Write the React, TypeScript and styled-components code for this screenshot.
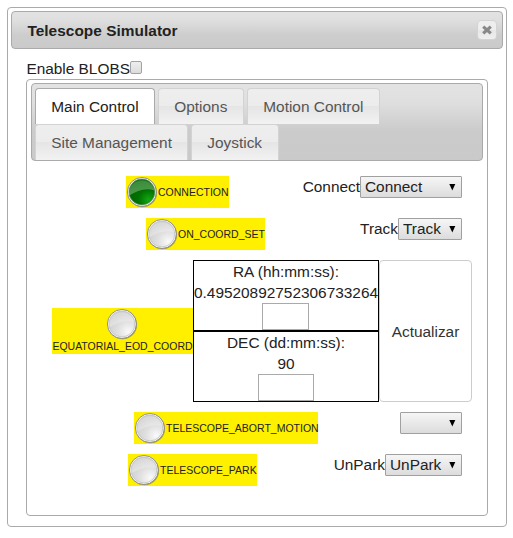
import React from "react";
import styled, { createGlobalStyle } from "styled-components";

const GlobalStyle = createGlobalStyle`
  *, *::before, *::after { box-sizing: border-box; }
  body {
    margin: 0;
    background: #fff;
    color: #222;
    font: 15.4px/21px "Liberation Sans", Arial, sans-serif;
  }
  input, select, button { font: inherit; color: inherit; }
`;

const Dialog = styled.section`
  width: 500px;
  height: 520px;
  margin: 7px;
  padding: 3px;
  border: 1px solid #aaa;
  border-radius: 4px;
`;

const TitleBar = styled.header`
  display: flex;
  align-items: center;
  justify-content: space-between;
  height: 38px;
  padding: 0 5px 0 15.4px;
  border: 1px solid #aaa;
  border-radius: 4px;
  background: linear-gradient(#e3e3e3 0%, #dedede 25%, #cdcdcd 65%, #cacaca 100%);
  font-weight: bold;
`;

const Title = styled.span`
  letter-spacing: 0.04px;
`;

const CloseButton = styled.button`
  display: grid;
  place-items: center;
  width: 20px;
  height: 20px;
  padding: 0;
  border: 1px solid #d3d3d3;
  border-radius: 4px;
  background: linear-gradient(#eee 49%, #e6e6e6 50%, #efefef);
`;

const Content = styled.div`
  padding: 9px 15px 0;
`;

const BlobsLabel = styled.label`
  display: flex;
  height: 21px;
  padding-left: 0.4px;
`;

const Checkbox = styled.input.attrs({ type: "checkbox" })`
  appearance: none;
  width: 12px;
  height: 13px;
  margin: 3px 0 0;
  border: 1px solid #a2a2a2;
  border-radius: 2px;
  background: linear-gradient(#eee, #dcdcdc);
`;

const Tabs = styled.div`
  width: 462px;
  height: 437px;
  padding: 3px 4px;
  border: 1px solid #aaa;
  border-radius: 4px;
`;

const TabList = styled.nav`
  display: flex;
  flex-wrap: wrap;
  align-content: flex-start;
  column-gap: 3px;
  height: 78px;
  padding: 4px 3px 0;
  border: 1px solid #aaa;
  border-radius: 4px;
  background: linear-gradient(#e3e3e3 0%, #dfdfdf 24%, #cbcbcb 62%, #cacaca 100%);
`;

const Tab = styled.button<{ $active?: boolean; $width: number }>`
  width: ${(p) => p.$width}px;
  height: 36px;
  padding: 0 0 0 15.3px;
  border: 1px solid ${(p) => (p.$active ? "#aaa" : "#d3d3d3")};
  border-bottom: 0;
  border-radius: 4px 4px 0 0;
  background: ${(p) =>
    p.$active ? "#fff" : "linear-gradient(#eee 0, #ececec 49%, #e5e5e5 50%, #f2f2f2 100%)"};
  color: ${(p) => (p.$active ? "#212121" : "#555")};
  text-align: left;
  white-space: nowrap;
`;

const Properties = styled.div`
  display: flex;
  flex-direction: column;
  gap: 10px;
  padding: 15px 11px 0 21px;
`;

const Row = styled.div<{ $indent: number }>`
  display: flex;
  align-items: flex-start;
  padding: 0 10px 0 ${(p) => p.$indent}px;
`;

const CoordRow = styled.div`
  display: flex;
  align-items: center;
  height: 142px;
`;

const Status = styled.div<{ $width: number; $stacked?: boolean }>`
  display: flex;
  flex-direction: ${(p) => (p.$stacked ? "column" : "row")};
  align-items: center;
  width: ${(p) => p.$width}px;
  height: ${(p) => (p.$stacked ? 46 : 32)}px;
  background: #fff000;
  font-size: 10.5px;
  line-height: ${(p) => (p.$stacked ? 13 : 30)}px;
  white-space: nowrap;
`;

const Lamp = styled.svg<{ $stacked?: boolean }>`
  flex: none;
  display: block;
  width: 32px;
  height: 32px;
  margin-right: ${(p) => (p.$stacked ? 1 : 0)}px;
`;

const Control = styled.label`
  display: flex;
  margin-left: auto;
`;

const SelectFrame = styled.span<{ $width: number }>`
  display: flex;
  position: relative;
  width: ${(p) => p.$width}px;
  height: 22px;
`;

const Select = styled.select`
  appearance: none;
  width: 100%;
  height: 22px;
  padding: 0 4px 1px;
  border: 1px solid #a0a0a0;
  border-radius: 1px;
  background: linear-gradient(#f6f6f6, #dcdcdc);
  line-height: 16px;
`;

const Arrow = styled.svg`
  position: absolute;
  top: 8px;
  right: 6px;
  width: 7px;
  height: 7px;
  pointer-events: none;
`;

const Cells = styled.div`
  width: 186px;
  height: 142px;
`;

const Cell = styled.div`
  display: flex;
  flex-direction: column;
  align-items: center;
  height: 71px;
  border: 1px solid #000;
  white-space: nowrap;
`;

const CellInput = styled.input<{ $width: number }>`
  width: ${(p) => p.$width}px;
  height: 27px;
  margin-right: ${(p) => p.$width % 2}px;
  padding: 1px;
  border: 1px solid #aaa;
  border-radius: 0;
  background: #fff;
`;

const UpdateButton = styled.button`
  width: 93px;
  height: 142px;
  padding: 0;
  border: 1px solid #ccc;
  border-radius: 4px;
  background: #fff;
  color: #333;
`;

function StatusLamp({ on = false, stacked }: { on?: boolean; stacked?: boolean }) {
  const id = React.useId();
  return (
    <Lamp $stacked={stacked} viewBox="0 0 32 32" aria-hidden="true">
      <defs>
        <linearGradient id={`${id}r`} x1="0" y1="0" x2="1" y2="1">
          <stop offset="0" stopColor="#888" />
          <stop offset="1" stopColor="#808080" />
        </linearGradient>
        <radialGradient id={`${id}f`} cx="0.75" cy="0.8" r="0.8">
          <stop offset="0" stopColor={on ? "#12a812" : "#fafafa"} />
          <stop offset="0.5" stopColor={on ? "#007000" : "#e0e0e0"} />
          <stop offset="1" stopColor={on ? "#006800" : "#d0d0d0"} />
        </radialGradient>
        <linearGradient id={`${id}g`} x1="0" y1="0" x2="0.2" y2="1">
          <stop offset="0" stopColor="#fff" stopOpacity={on ? 0.22 : 0.15} />
          <stop offset="1" stopColor="#fff" stopOpacity={on ? 0.3 : 0.3} />
        </linearGradient>
      </defs>
      <circle cx="16.5" cy="16.7" r="14.6" fill="#555" opacity="0.5" />
      <circle cx="15.9" cy="16" r="14.5" fill="#f4f4f4" stroke={`url(#${id}r)`} strokeWidth="0.9" />
      <circle cx="15.9" cy="16" r="12.9" fill={`url(#${id}f)`} stroke={on ? "#5c8c5c" : "#bdbdbd"} strokeWidth="0.7" />
      <path d="M3.5 19.2A12.6 12.6 0 0 1 28.3 14.4C19 11.5 11 15 3.5 19.2Z" fill={`url(#${id}g)`} />
    </Lamp>
  );
}

type StatusBadgeProps = { name: string; width: number; on?: boolean; stacked?: boolean };

function StatusBadge({ name, width, on, stacked }: StatusBadgeProps) {
  return (
    <Status $width={width} $stacked={stacked}>
      <StatusLamp on={on} stacked={stacked} />
      <span>{name}</span>
    </Status>
  );
}

const tabs = [
  { name: "Main Control", width: 120 },
  { name: "Options", width: 86 },
  { name: "Motion Control", width: 133 },
  { name: "Site Management", width: 153 },
  { name: "Joystick", width: 88 },
];

type Property = { name: string; indent: number; width: number; value: string; selectWidth: number; on?: boolean };

const properties: Property[] = [
  { name: "CONNECTION", indent: 74, width: 103, value: "Connect", selectWidth: 102, on: true },
  { name: "ON_COORD_SET", indent: 94, width: 119, value: "Track", selectWidth: 64 },
  { name: "TELESCOPE_ABORT_MOTION", indent: 82, width: 184, value: "", selectWidth: 62 },
  { name: "TELESCOPE_PARK", indent: 76, width: 129, value: "UnPark", selectWidth: 77 },
];

function PropertyRow({ name, indent, width, value, selectWidth, on }: Property) {
  return (
    <Row $indent={indent}>
      <StatusBadge name={name} width={width} on={on} />
      <Control>
        {value}
        <SelectFrame $width={selectWidth}>
          <Select defaultValue={value}>
            <option value={value}>{value}</option>
          </Select>
          <Arrow viewBox="0 0 7 7">
            <path d="M0.3 0H6.3L3.3 6.5Z" fill="#000" />
          </Arrow>
        </SelectFrame>
      </Control>
    </Row>
  );
}

export default function App() {
  return (
    <>
      <GlobalStyle />
      <Dialog>
        <TitleBar>
          <Title>Telescope Simulator</Title>
          <CloseButton aria-label="Close">
            <svg width="12" height="12" viewBox="0 0 12 12">
              <path d="M2.2 2.6L9.8 9.4M9.8 2.6L2.2 9.4" stroke="#888" strokeWidth="3.2" />
            </svg>
          </CloseButton>
        </TitleBar>
        <Content>
          <BlobsLabel>
            Enable BLOBS
            <Checkbox />
          </BlobsLabel>
          <Tabs>
            <TabList>
              {tabs.map((tab, i) => (
                <Tab key={tab.name} $width={tab.width} $active={i === 0}>
                  {tab.name}
                </Tab>
              ))}
            </TabList>
            <Properties>
              {properties.slice(0, 2).map((p) => (
                <PropertyRow key={p.name} {...p} />
              ))}
              <CoordRow>
                <StatusBadge name="EQUATORIAL_EOD_COORD" width={141} stacked />
                <Cells>
                  <Cell>
                    <span>RA (hh:mm:ss):</span>
                    <span>0.49520892752306733264</span>
                    <CellInput $width={47} aria-label="RA" />
                  </Cell>
                  <Cell>
                    <span>DEC (dd:mm:ss):</span>
                    <span>90</span>
                    <CellInput $width={56} aria-label="DEC" />
                  </Cell>
                </Cells>
                <UpdateButton>Actualizar</UpdateButton>
              </CoordRow>
              {properties.slice(2).map((p) => (
                <PropertyRow key={p.name} {...p} />
              ))}
            </Properties>
          </Tabs>
        </Content>
      </Dialog>
    </>
  );
}
